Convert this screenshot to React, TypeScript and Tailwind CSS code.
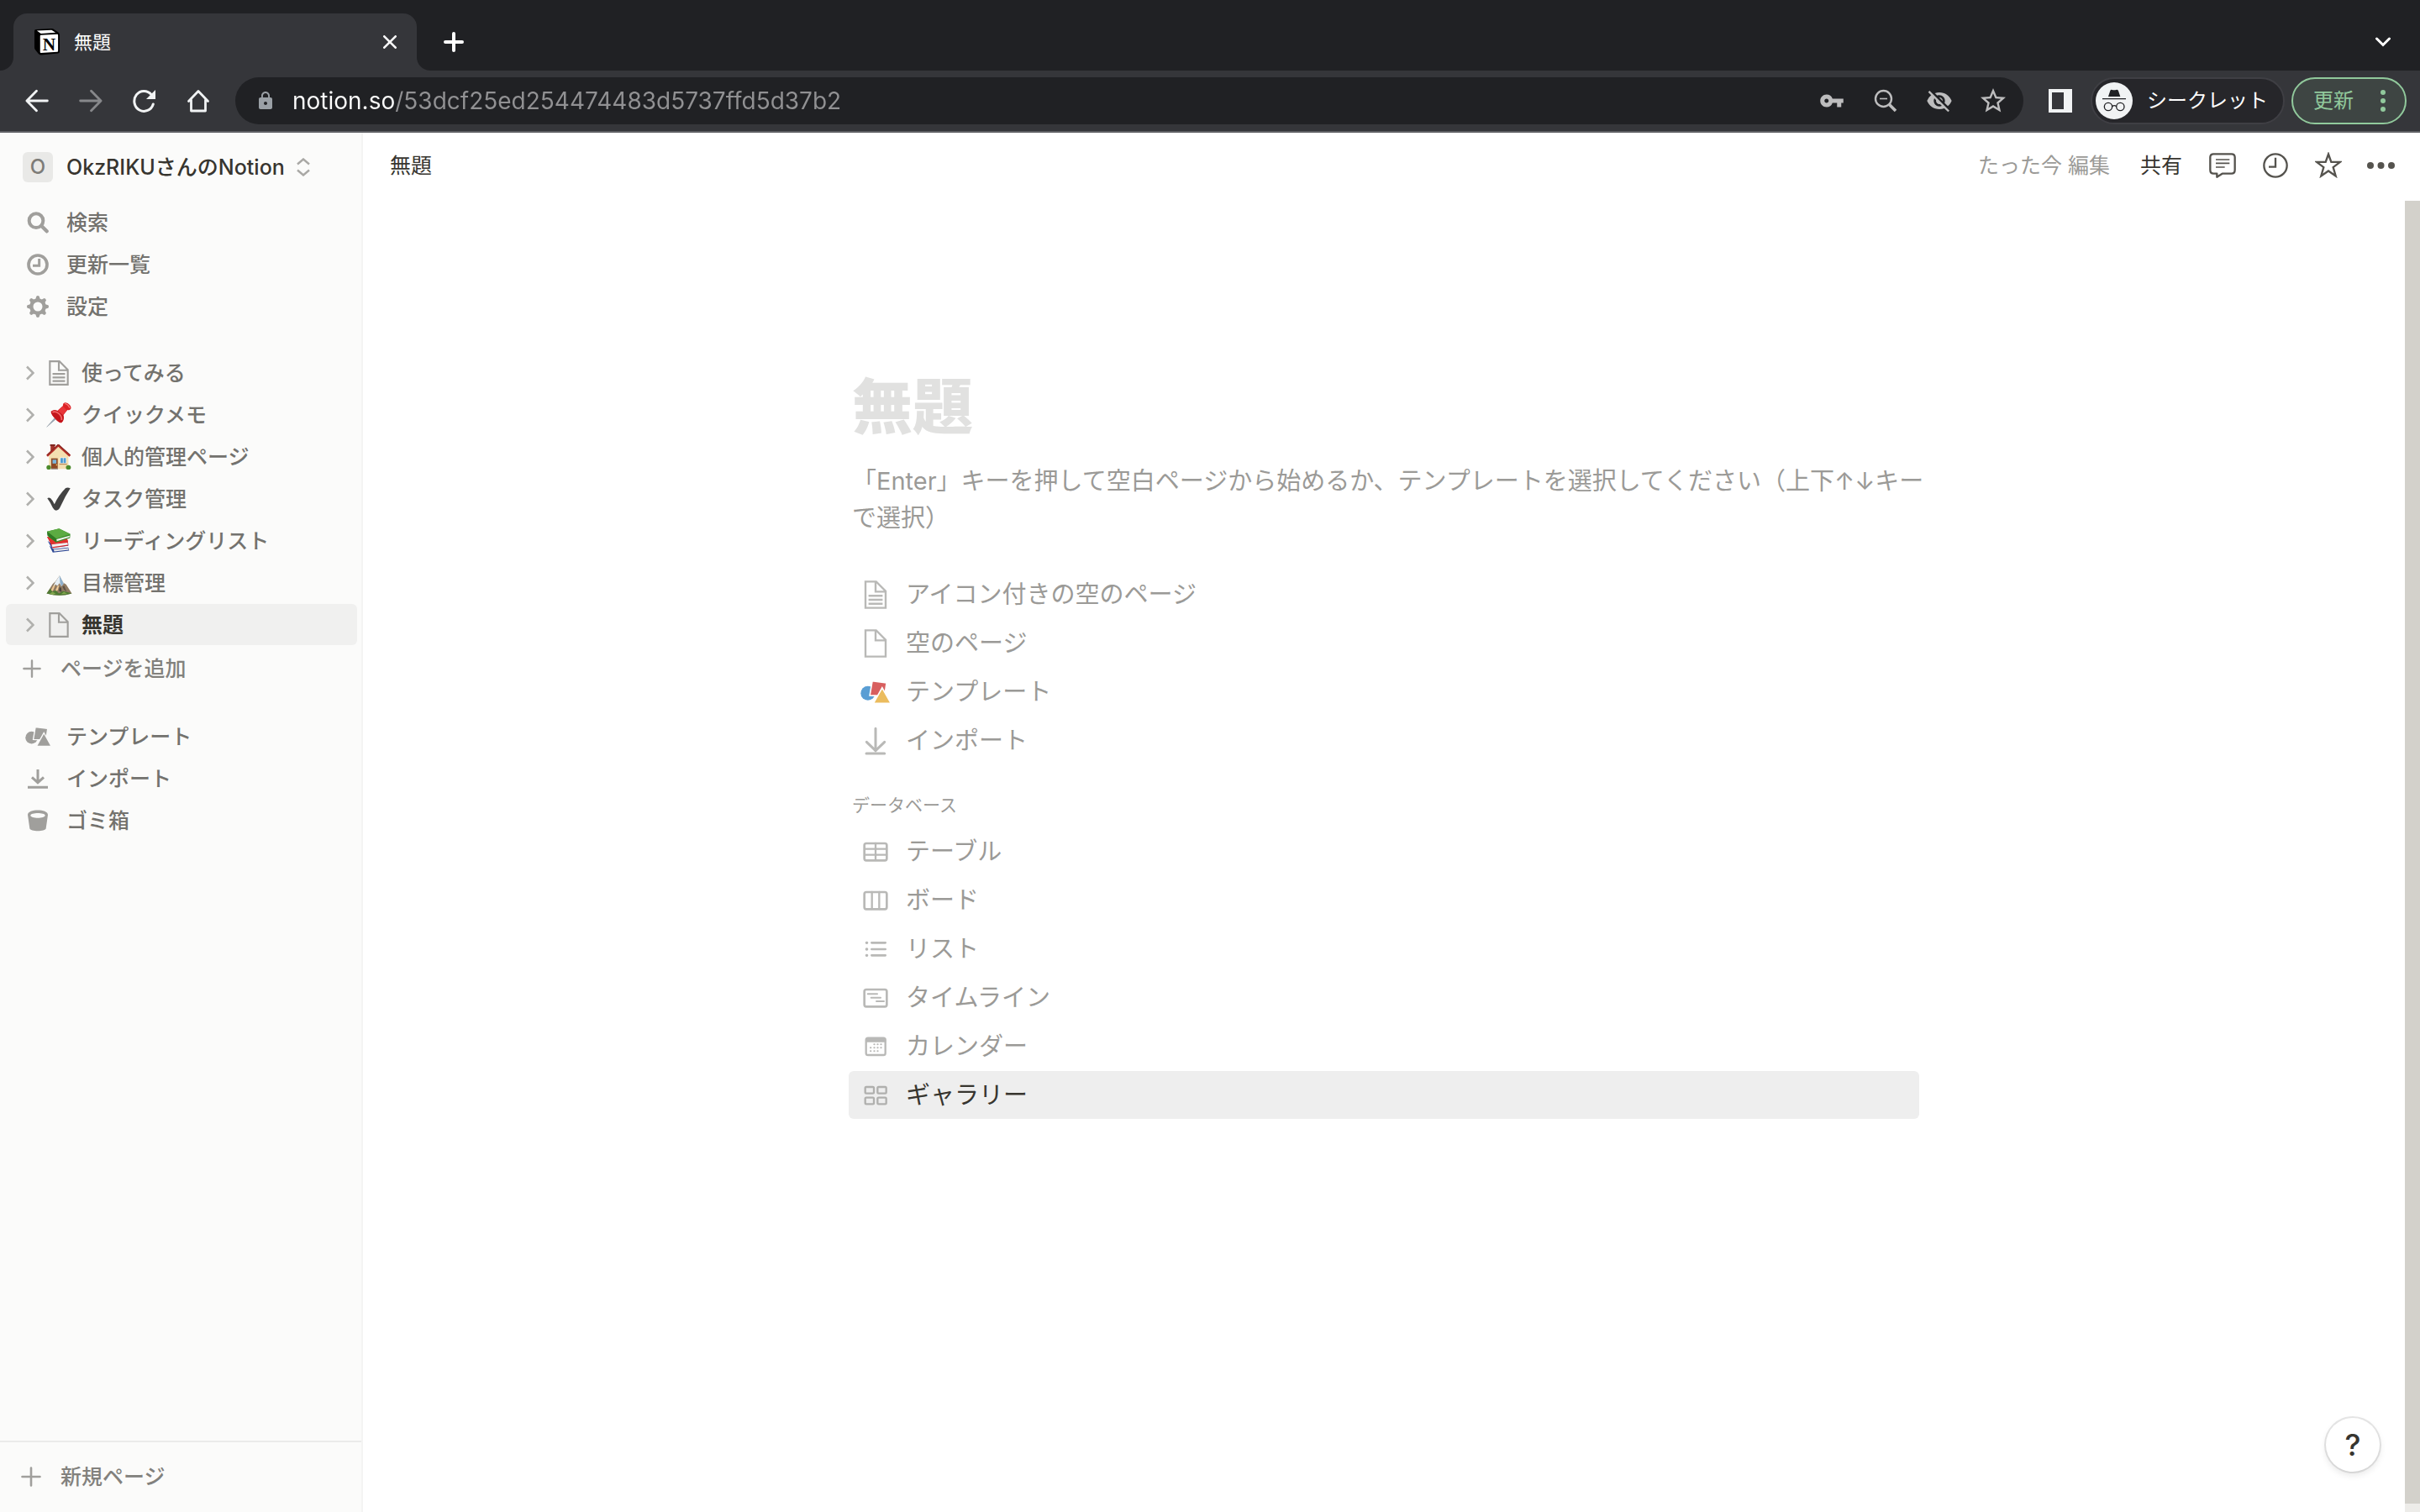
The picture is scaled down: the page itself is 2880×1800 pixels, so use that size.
import type { ReactNode } from 'react'
import { MdVisibilityOff, MdVpnKey, MdLock, MdStarBorder } from 'react-icons/md'

interface IconProps {
  className?: string
}

/* ---------- browser icons ---------- */

function NotionLogo() {
  return (
    <svg viewBox="0 0 31 33" className="h-8 w-8" aria-hidden="true">
      <path d="M0 3Q0 1 2 1L21 0Q23 0 24 1L29 4.500Q31 6 31 8V28Q31 30 29 30.300L8 32.500Q6 32.500 5 31L1 26Q0 25 0 23Z" fill="#000" />
      <path d="M3 2.600L21 1.700L26 5L8 6.200Z" fill="#fff" />
      <path d="M7 9Q7 8 8 8L28 7Q29 7 29 8V27.500Q29 28.500 28 28.500L8 30Q7 30 7 29Z" fill="#fff" />
      <text x="18" y="26.500" textAnchor="middle" fontFamily="Liberation Serif, serif" fontWeight="700" fontSize="22" fill="#000">
        N
      </text>
    </svg>
  )
}

function ArrowIcon({ className }: IconProps) {
  return (
    <svg viewBox="0 0 26 26" className={className} fill="none" stroke="currentColor" strokeWidth="2.600" strokeLinecap="round" strokeLinejoin="round" aria-hidden="true">
      <path d="M24.500 13H2M12.500 2L1.800 13L12.500 24" />
    </svg>
  )
}

function ReloadIcon() {
  return (
    <svg viewBox="0 0 28 28" className="size-7" fill="none" aria-hidden="true">
      <path d="M24.300 18A11.500 12 0 1 1 22 6.500" stroke="currentColor" strokeWidth="3" strokeLinecap="round" />
      <path d="M27 1V12H16Z" fill="currentColor" />
    </svg>
  )
}

function HomeIcon() {
  return (
    <svg viewBox="0 0 28 28" className="size-7" fill="none" stroke="currentColor" strokeWidth="2.800" strokeLinecap="round" strokeLinejoin="round" aria-hidden="true">
      <path d="M2.500 14.500L14 2.500L25.500 14.500M5.500 13V26H22.500V13" />
    </svg>
  )
}

function ZoomOutIcon() {
  return (
    <svg viewBox="0 0 28 28" className="size-7" fill="none" stroke="currentColor" aria-hidden="true">
      <circle cx="11.500" cy="11.500" r="9.500" strokeWidth="2.400" />
      <path d="M7 11.500H16" strokeWidth="1.600" />
      <path d="M18.500 18.500L26 26" strokeWidth="3.600" />
    </svg>
  )
}

function IncognitoIcon() {
  return (
    <svg viewBox="0 0 132 132" className="size-11 rounded-full bg-[#f1f3f4]" fill="none" stroke="#202124" strokeWidth="4" aria-hidden="true">
      <path d="M45 51L52 30Q54 25 59 27Q66 29 73 27Q78 25 81 30L88 51Z" fill="#202124" stroke="none" />
      <path d="M24 59H108" />
      <circle cx="45" cy="87" r="14" />
      <circle cx="88" cy="87" r="14" />
      <path d="M59 86Q66 80 74 86" />
    </svg>
  )
}

/* ---------- sidebar icons, 78-unit grid ---------- */

function SearchIcon() {
  return (
    <svg viewBox="0 0 78 78" className="size-[26px]" fill="none" stroke="currentColor" aria-hidden="true">
      <circle cx="33" cy="32" r="25" strokeWidth="12" />
      <path d="M53 52L71 70" strokeWidth="13" strokeLinecap="round" />
    </svg>
  )
}

function UpdatesIcon() {
  return (
    <svg viewBox="0 0 78 78" className="size-[26px]" fill="none" stroke="currentColor" aria-hidden="true">
      <circle cx="39" cy="39" r="33" strokeWidth="11" />
      <path d="M44 18V43H21" strokeWidth="9" />
    </svg>
  )
}

function GearIcon() {
  return (
    <svg viewBox="0 0 78 78" className="size-[26px]" aria-hidden="true">
      <circle cx="39" cy="39" r="23" fill="none" stroke="currentColor" strokeWidth="13" />
      {[0, 45, 90, 135, 180, 225, 270, 315].map((angle) => (
        <path key={angle} d="M30 15L34 2Q39 -2 44 2L48 15Z" fill="currentColor" transform={`rotate(${angle} 39 39)`} />
      ))}
    </svg>
  )
}

function DownloadIcon() {
  return (
    <svg viewBox="0 0 78 78" className="size-[26px]" fill="none" stroke="currentColor" strokeWidth="9" aria-hidden="true">
      <path d="M39 6V50M18 34L39 53L60 34M3 70H75" />
    </svg>
  )
}

function TrashIcon() {
  return (
    <svg viewBox="0 0 78 78" className="size-[26px]" aria-hidden="true">
      <path fillRule="evenodd" fill="currentColor" d="M3 18C3 -4 75 -4 75 18L68 67C66 79 12 79 10 67ZM13 20C13 32 65 32 65 20C65 9 13 9 13 20Z" />
    </svg>
  )
}

function ShapesIcon({ colored }: { colored?: boolean }) {
  const edge = colored ? '#ffffff' : '#fbfbfa'
  return (
    <svg viewBox="0 0 110 84" className={colored ? 'h-7 w-9' : 'h-6 w-[31px]'} aria-hidden="true">
      <circle cx="27" cy="46" r="26" fill={colored ? '#5a9ed4' : 'currentColor'} />
      <path d="M43 1L95 8L88 56L34 54Z" fill={colored ? '#d85f5f' : 'currentColor'} stroke={edge} strokeWidth="5" />
      <path d="M79 26L111 83H47Z" fill={colored ? '#ebbc5e' : 'currentColor'} stroke={edge} strokeWidth="5" />
    </svg>
  )
}

function PageIcon({ lined, className }: IconProps & { lined?: boolean }) {
  return (
    <svg viewBox="0 0 30 30" className={className} fill="currentColor" aria-hidden="true">
      <path d="M16 1H4v28h22V11L16 1zm0 2.800L23.200 11H16V3.800zM24 27H6V3h8v10h10v14z" />
      {lined && <path d="M8 17h14v-2H8v2zm0 4h14v-2H8v2zm0 4h14v-2H8v2z" />}
    </svg>
  )
}

function PlusIcon({ className }: IconProps) {
  return (
    <svg viewBox="0 0 24 24" className={className} fill="none" stroke="currentColor" strokeWidth="2.600" strokeLinecap="round" aria-hidden="true">
      <path d="M12 1.500V22.500M1.500 12H22.500" />
    </svg>
  )
}

function ChevronIcon() {
  return (
    <svg viewBox="0 0 10 18" className="h-[18px] w-[10px] text-[#b0b0ad]" fill="none" stroke="currentColor" strokeWidth="2.600" aria-hidden="true">
      <path d="M1 1.500L8.500 9L1 16.500" />
    </svg>
  )
}

/* ---------- page emoji ---------- */

function PinEmoji() {
  return (
    <svg viewBox="0 0 90 90" className="size-[30px]" aria-hidden="true">
      <path d="M2 88L34 51L39 56Z" fill="#9aa7b4" stroke="#77838f" />
      <path d="M17 33Q26 25 40 30L60 12Q58 3 67 1Q76 0 84 9Q91 17 87 24Q83 29 76 27L61 46Q66 62 55 72Q47 75 33 59Q18 45 17 33Z" fill="#dc2226" />
      <path d="M17 33Q26 25 40 30Q55 38 61 46Q66 62 55 72Q47 75 33 59Q18 45 17 33Z" fill="#c4161c" />
      <path d="M22 35Q34 30 46 41Q56 50 55 63" stroke="#f4696a" strokeWidth="5" fill="none" />
      <path d="M41 31L60 14L73 28L59 45Q50 36 41 31Z" fill="#e8363a" />
      <path d="M66 4Q78 6 84 20" stroke="#fa7a78" strokeWidth="4" fill="none" />
    </svg>
  )
}

function HouseEmoji() {
  return (
    <svg viewBox="0 0 90 92" className="size-[30px]" aria-hidden="true">
      <path d="M15 2H30V30H15Z" fill="#a5342a" />
      <path d="M13 0H32V6H13Z" fill="#7f2720" />
      <path d="M9 40L44 8L80 40V90H9Z" fill="#f4deb0" />
      <path d="M2 42L43 3L86 42" stroke="#b32b24" strokeWidth="8" fill="none" />
      <path d="M2 39L43 0L86 38" stroke="#56302b" strokeWidth="2" fill="none" />
      <path d="M17 51H41V89H17Z" fill="#8d4a25" />
      <path d="M22 56H36V70H22Z" fill="#7cb6dc" />
      <circle cx="37" cy="75" r="2.500" fill="#f2cf63" />
      <path d="M49 48H73V70H49Z" fill="#fff" />
      <path d="M51 50H60V68H51ZM62 50H71V68H62Z" fill="#4f9bd2" />
      <path d="M47 70H75V74H47Z" fill="#b98c5a" />
      <ellipse cx="8" cy="84" rx="8" ry="8" fill="#4c8a2b" />
      <ellipse cx="80" cy="84" rx="9" ry="8" fill="#4c8a2b" />
      <path d="M16 88H42V92H16Z" fill="#a9a29a" />
    </svg>
  )
}

function CheckEmoji() {
  return (
    <svg viewBox="0 0 86 84" className="size-7" aria-hidden="true">
      <path d="M1 40Q6 35 13 40Q21 48 27 61Q42 28 68 2Q76 -1 85 3Q66 32 49 70Q43 84 33 84Q26 83 21 74Q12 54 1 40Z" fill="#434343" />
    </svg>
  )
}

function BooksEmoji() {
  return (
    <svg viewBox="0 0 86 88" className="size-[30px]" aria-hidden="true">
      <path d="M10 60L22 84L79 78L76 67L24 72Z" fill="#2c4795" />
      <path d="M25 74L76 69L77 75L27 81Z" fill="#e5e5e8" />
      <path d="M4 44L18 68L76 61L76 52L20 55Z" fill="#3553a6" />
      <path d="M2 29L74 40L76 60L22 69Z" fill="#d2232a" />
      <path d="M18 56L73 50L75 57L20 65Z" fill="#f1efef" />
      <path d="M2 29L18 55L75 48L72 36Z" fill="#e2332f" />
      <path d="M2 11L44 1L83 20L82 34L34 49L7 30Z" fill="#3c8e2d" />
      <path d="M35 38L81 26L80 31L36 45Z" fill="#f4f4f2" />
      <path d="M2 11L44 1L83 20L34 36Z" fill="#5cab42" />
      <path d="M2 11L34 36V49L3 25Z" fill="#2f7a24" />
    </svg>
  )
}

function MountainEmoji() {
  return (
    <svg viewBox="0 -18 94 92" className="h-[30px] w-[31px]" aria-hidden="true">
      <path d="M1 66L23 32L33 23L48 1L62 27L72 33L93 66Q48 80 1 66Z" fill="#8f7a62" />
      <path d="M33 24L48 1L63 30L55 40L48 29L40 39L34 33L24 42Z" fill="#e6eff6" />
      <path d="M48 1L63 30L55 40L50 28Z" fill="#8fb0cc" />
      <path d="M24 40L33 35L24 56L14 60Z" fill="#efc893" />
      <path d="M40 41L47 34L42 54L30 62Z" fill="#f0cb98" />
      <path d="M59 42L65 38L74 60L64 52Z" fill="#5d5146" />
      <path d="M48 43L54 46L56 62L46 56Z" fill="#4b443f" />
      <path d="M1 66L14 49L22 60L34 55L46 66L60 58L78 62L93 66Q48 80 1 66Z" fill="#4f7a33" />
      <path d="M12 68L22 60L34 66L24 71ZM54 69L64 61L76 67Z" fill="#86a84f" />
    </svg>
  )
}

/* ---------- page menu icons, 108-unit grid ---------- */

function MenuSvg({ children }: { children: ReactNode }) {
  return (
    <svg viewBox="0 0 108 108" className="size-9" fill="none" stroke="currentColor" strokeWidth="6" strokeLinecap="round" strokeLinejoin="round" aria-hidden="true">
      {children}
    </svg>
  )
}

function Frame() {
  return <rect x="14" y="24" width="80" height="61" rx="7" strokeWidth="8" />
}

const importIcon = (
  <MenuSvg>
    <path d="M54 10V89M22 58L54 89L86 58M21 99H86" strokeWidth="9" />
  </MenuSvg>
)
const tableIcon = (
  <MenuSvg>
    <Frame />
    <path d="M54 24V84M15 44H93M15 65H93" strokeWidth="7" />
  </MenuSvg>
)
const boardIcon = (
  <MenuSvg>
    <Frame />
    <path d="M41 24V84M67 24V84" strokeWidth="7" />
  </MenuSvg>
)
const listIcon = (
  <MenuSvg>
    <path d="M40 31H89M40 54H89M40 76H89" strokeWidth="8" />
    <path d="M22 31H23M22 54H23M22 76H23" strokeWidth="10" />
  </MenuSvg>
)
const timelineIcon = (
  <MenuSvg>
    <Frame />
    <path d="M26 40H60M38 53H72M57 66H84" strokeWidth="6" />
  </MenuSvg>
)
const calendarIcon = (
  <MenuSvg>
    <rect x="20" y="23" width="69" height="61" rx="7" strokeWidth="7" />
    <path d="M21 27H88V35H21Z" fill="currentColor" />
    <path d="M49 46H50M61 46H62M73 46H74M36 58H37M49 58H50M61 58H62M73 58H74M36 70H37M49 70H50M61 70H62" strokeWidth="6" />
  </MenuSvg>
)
const galleryIcon = (
  <MenuSvg>
    <rect x="17" y="24" width="31" height="23" rx="4" strokeWidth="7" />
    <rect x="61" y="24" width="31" height="23" rx="4" strokeWidth="7" />
    <rect x="17" y="62" width="31" height="23" rx="4" strokeWidth="7" />
    <rect x="61" y="62" width="31" height="23" rx="4" strokeWidth="7" />
  </MenuSvg>
)

/* ---------- data ---------- */

const shortcuts = [
  { label: '検索', icon: <SearchIcon /> },
  { label: '更新一覧', icon: <UpdatesIcon /> },
  { label: '設定', icon: <GearIcon /> },
]

const pages = [
  { label: '使ってみる', icon: <PageIcon lined className="size-8" /> },
  { label: 'クイックメモ', icon: <PinEmoji /> },
  { label: '個人的管理ページ', icon: <HouseEmoji /> },
  { label: 'タスク管理', icon: <CheckEmoji /> },
  { label: 'リーディングリスト', icon: <BooksEmoji /> },
  { label: '目標管理', icon: <MountainEmoji /> },
  { label: '無題', icon: <PageIcon className="size-8" />, active: true },
]

const tools = [
  { label: 'テンプレート', icon: <ShapesIcon /> },
  { label: 'インポート', icon: <DownloadIcon /> },
  { label: 'ゴミ箱', icon: <TrashIcon /> },
]

const starters = [
  { label: 'アイコン付きの空のページ', icon: <PageIcon lined className="size-9" /> },
  { label: '空のページ', icon: <PageIcon className="size-9" /> },
  { label: 'テンプレート', icon: <ShapesIcon colored /> },
  { label: 'インポート', icon: importIcon },
]

const databases = [
  { label: 'テーブル', icon: tableIcon },
  { label: 'ボード', icon: boardIcon },
  { label: 'リスト', icon: listIcon },
  { label: 'タイムライン', icon: timelineIcon },
  { label: 'カレンダー', icon: calendarIcon },
  { label: 'ギャラリー', icon: galleryIcon, active: true },
]

/* ---------- browser chrome ---------- */

function TabStrip() {
  return (
    <div className="flex h-[84px] items-end bg-[#202124] px-4">
      <div className="relative flex h-[68px] w-[480px] items-center rounded-t-2xl bg-[#35363a] px-6 text-white">
        <svg viewBox="0 0 16 16" className="absolute bottom-0 -left-4 size-4" aria-hidden="true">
          <path d="M16 0V16H0A16 16 0 0 0 16 0Z" fill="#35363a" />
        </svg>
        <svg viewBox="0 0 16 16" className="absolute bottom-0 -right-4 size-4" aria-hidden="true">
          <path d="M0 0V16H16A16 16 0 0 1 0 0Z" fill="#35363a" />
        </svg>
        <NotionLogo />
        <span className="ml-4 flex-1 text-[22px] leading-8">無題</span>
        <button type="button" aria-label="タブを閉じる">
          <svg viewBox="0 0 16 16" className="size-4" stroke="currentColor" strokeWidth="2.600" strokeLinecap="round" aria-hidden="true">
            <path d="M1.300 1.300L14.700 14.700M14.700 1.300L1.300 14.700" />
          </svg>
        </button>
      </div>
      <button type="button" aria-label="新しいタブ" className="mb-[22px] ml-8 text-white">
        <svg viewBox="0 0 24 24" className="size-6" stroke="currentColor" strokeWidth="4" strokeLinecap="round" aria-hidden="true">
          <path d="M12 2V22M2 12H22" />
        </svg>
      </button>
      <button type="button" aria-label="タブを検索" className="mb-7 ml-auto mr-[19px] text-white">
        <svg viewBox="0 0 18 12" className="h-3 w-[18px]" fill="none" stroke="currentColor" strokeWidth="3" strokeLinecap="round" aria-hidden="true">
          <path d="M1.500 2L9 9.500L16.500 2" />
        </svg>
      </button>
    </div>
  )
}

function Toolbar() {
  return (
    <div className="flex h-[74px] items-center border-b-2 border-[#5f6064] bg-[#35363a] pl-[30px] pr-4 text-[#f1f3f4]">
      <div className="flex items-center gap-9">
        <button type="button" aria-label="戻る">
          <ArrowIcon className="size-7" />
        </button>
        <button type="button" aria-label="進む" className="text-[#87888b]">
          <ArrowIcon className="size-7 rotate-180" />
        </button>
        <button type="button" aria-label="再読み込み">
          <ReloadIcon />
        </button>
        <button type="button" aria-label="ホーム">
          <HomeIcon />
        </button>
      </div>
      <div className="ml-[30px] flex h-14 flex-1 items-center gap-8 rounded-full bg-[#202124] pl-6 pr-5 text-[#bdbdbe]">
        <div className="flex flex-1 items-center gap-5">
          <MdLock className="size-6 text-[#9aa0a6]" aria-hidden="true" />
          <input
            type="text"
            aria-label="アドレス"
            defaultValue="notion.so/53dcf25ed254474483d5737ffd5d37b2"
            className="min-w-0 flex-1 bg-[linear-gradient(90deg,#fff_122px,#919193_122px)] bg-clip-text text-[28px] leading-10 text-transparent outline-none"
          />
        </div>
        <button type="button" aria-label="パスワード" className="flex size-8 items-center justify-center">
          <MdVpnKey className="size-[30px]" />
        </button>
        <button type="button" aria-label="ズーム" className="flex size-8 items-center justify-center">
          <ZoomOutIcon />
        </button>
        <button type="button" aria-label="Cookie をブロック" className="flex size-8 items-center justify-center">
          <MdVisibilityOff className="size-8" />
        </button>
        <button type="button" aria-label="ブックマーク" className="flex size-8 items-center justify-center">
          <MdStarBorder className="size-9 shrink-0" />
        </button>
      </div>
      <button type="button" aria-label="サイドパネル" className="ml-[30px] flex size-7 bg-[#f1f3f4] p-1">
        <span className="h-full w-3.5 bg-[#35363a]" />
      </button>
      <button type="button" className="ml-[22px] flex h-14 items-center gap-[17px] rounded-full border-2 border-[#3f3f44] bg-[#26262a] pl-1 pr-[18px] text-2xl text-white">
        <IncognitoIcon />
        シークレット
      </button>
      <button type="button" className="ml-2 flex h-14 items-center rounded-full border-2 border-[#91c99c] bg-[#3e4543] pl-6 pr-[23px] text-2xl text-[#91c99c]">
        更新
        <svg viewBox="0 0 6 26" className="ml-8 h-[26px] w-1.5" fill="currentColor" aria-hidden="true">
          <circle cx="3" cy="3" r="3" />
          <circle cx="3" cy="13" r="3" />
          <circle cx="3" cy="23" r="3" />
        </svg>
      </button>
    </div>
  )
}

/* ---------- sidebar ---------- */

function SidebarLink({ label, icon }: { label: string; icon: ReactNode }) {
  return (
    <a href="#" className="flex h-[49px] items-center rounded-md pl-5 text-[#73726e]">
      <span className="flex w-9 justify-center text-[#a09f9c]">{icon}</span>
      <span className="ml-4">{label}</span>
    </a>
  )
}

function Sidebar() {
  return (
    <aside className="flex w-[432px] shrink-0 flex-col border-r-2 border-[#f4f4f3] bg-[#fbfbfa] text-[25px] font-medium leading-9">
      <button type="button" className="flex h-[82px] items-center pl-[27px] text-left text-[#37352f]">
        <span className="flex size-9 items-center justify-center rounded-md bg-[#e9e9e7] text-2xl text-[#7d7c78]">O</span>
        <span className="ml-4">OkzRIKUさんのNotion</span>
        <svg viewBox="0 0 16 22" className="ml-[14px] h-[22px] w-4 text-[#a9a8a5]" fill="none" stroke="currentColor" strokeWidth="2.400" aria-hidden="true">
          <path d="M1 7.500L8 1.500L15 7.500M1 14.500L8 20.500L15 14.500" />
        </svg>
      </button>

      <nav className="flex flex-1 flex-col pl-[7px] pr-[5px]">
        <div className="flex flex-col gap-px">
          {shortcuts.map((item) => (
            <SidebarLink key={item.label} {...item} />
          ))}
        </div>

        <div className="mt-[30px] flex flex-col gap-px">
          {pages.map((page) => (
            <a
              key={page.label}
              href="#"
              className={`flex h-[49px] items-center rounded-md pl-6 ${page.active ? 'bg-[#f0f0ef] font-bold text-[#37352f]' : 'text-[#73726e]'}`}
            >
              <ChevronIcon />
              <span className="ml-[11px] flex w-9 justify-center text-[#a09f9c]">{page.icon}</span>
              <span className="ml-[9px]">{page.label}</span>
            </a>
          ))}
        </div>

        <button type="button" className="mt-[3px] flex h-[49px] items-center pl-5 text-left text-[#82817d]">
          <PlusIcon className="size-[22px] text-[#a09f9c]" />
          <span className="ml-[23px]">ページを追加</span>
        </button>

        <div className="mt-8 flex flex-col gap-px">
          {tools.map((item) => (
            <SidebarLink key={item.label} {...item} />
          ))}
        </div>
      </nav>

      <button type="button" className="flex h-[85px] items-center border-t-2 border-[#ebebea] pb-0.5 pl-[25px] text-left text-[#82817d]">
        <PlusIcon className="size-6 text-[#a09f9c]" />
        <span className="ml-[23px]">新規ページ</span>
      </button>
    </aside>
  )
}

/* ---------- page ---------- */

function PageHeader() {
  return (
    <header className="flex h-[81px] items-center pb-1 pl-8 pr-[30px] text-[25px] leading-9 text-[#37352f]">
      <a href="#">無題</a>
      <span className="ml-auto text-[#9b9a97]">たった今 編集</span>
      <button type="button" className="ml-9">
        共有
      </button>
      <div className="ml-8 flex items-center gap-8 text-[#55534e]">
        <button type="button" aria-label="コメント">
          <svg viewBox="0 0 96 90" className="h-[30px] w-8" fill="none" stroke="currentColor" strokeWidth="7" strokeLinejoin="round" aria-hidden="true">
            <path d="M16 4H80Q92 4 92 16V61Q92 74 80 74H47L28 86V74H16Q4 74 4 61V16Q4 4 16 4Z" />
            <path d="M24 24H73M24 37H73M24 51H56" strokeWidth="5" />
          </svg>
        </button>
        <button type="button" aria-label="更新履歴">
          <svg viewBox="0 0 90 90" className="size-[30px]" fill="none" stroke="currentColor" strokeWidth="7" aria-hidden="true">
            <circle cx="45" cy="45" r="41" />
            <path d="M45 17V50H21" />
          </svg>
        </button>
        <button type="button" aria-label="お気に入り">
          <svg viewBox="0 0 96 92" className="h-[31px] w-8" fill="none" stroke="currentColor" strokeWidth="7" aria-hidden="true">
            <path d="M48 7L58 35H90L65 54L74 85L48 67L22 85L31 54L6 35H38Z" />
          </svg>
        </button>
        <button type="button" aria-label="その他" className="-ml-0.5">
          <svg viewBox="0 0 33 8" className="h-2 w-[33px]" fill="currentColor" aria-hidden="true">
            <circle cx="4" cy="4" r="4" />
            <circle cx="16.500" cy="4" r="4" />
            <circle cx="29" cy="4" r="4" />
          </svg>
        </button>
      </div>
    </header>
  )
}

function MenuItem({ label, icon, active }: { label: string; icon: ReactNode; active?: boolean }) {
  return (
    <button
      type="button"
      className={`flex h-[57px] w-full items-center gap-[18px] rounded-md px-[14px] text-left ${active ? 'bg-[#eeeeee] text-[#37352f]' : 'text-[#9b9a97]'}`}
    >
      <span className={`flex w-9 justify-center ${active ? 'text-[#b0b0ae]' : 'text-[#b9b9b7]'}`}>{icon}</span>
      {label}
    </button>
  )
}

function PageBody() {
  return (
    <div className="mx-auto w-full max-w-[1274px] pt-[202px] text-[29px] leading-[44px]">
      <h1 className="px-1 text-[72px] font-black leading-[86px] text-[#e1e1e0]">無題</h1>
      <p className="-mr-4 mt-6 pl-1 text-[#9b9a97]">
        「Enter」キーを押して空白ページから始めるか、テンプレートを選択してください（上下↑↓キーで選択）
      </p>
      <div className="mt-10 flex flex-col gap-px">
        {starters.map((item) => (
          <MenuItem key={item.label} {...item} />
        ))}
      </div>
      <h2 className="mt-[37px] px-1 text-[21px] leading-6 text-[#9b9a97]">データベース</h2>
      <div className="mt-[14px] flex flex-col gap-px">
        {databases.map((item) => (
          <MenuItem key={item.label} {...item} />
        ))}
      </div>
    </div>
  )
}

export default function App() {
  return (
    <div
      lang="ja"
      className="flex h-screen flex-col overflow-hidden bg-white font-['Inter','Noto_Sans_CJK_JP',sans-serif]"
    >
      <TabStrip />
      <Toolbar />
      <div className="flex min-h-0 flex-1">
        <Sidebar />
        <main className="relative flex min-w-0 flex-1 flex-col">
          <PageHeader />
          <div className="flex min-h-0 flex-1">
            <div className="min-w-0 flex-1">
              <PageBody />
            </div>
            <div className="w-[18px] bg-[#edece9] pb-[10px]">
              <div className="h-full bg-[#d3d1cb]" />
            </div>
          </div>
          <button
            type="button"
            aria-label="ヘルプ"
            className="absolute bottom-12 right-12 flex size-16 items-center justify-center rounded-full bg-white text-4xl font-medium text-[#37352f] shadow-[0_0_0_2px_rgba(15,15,15,0.1),0_4px_8px_rgba(15,15,15,0.1)]"
          >
            ?
          </button>
        </main>
      </div>
    </div>
  )
}
